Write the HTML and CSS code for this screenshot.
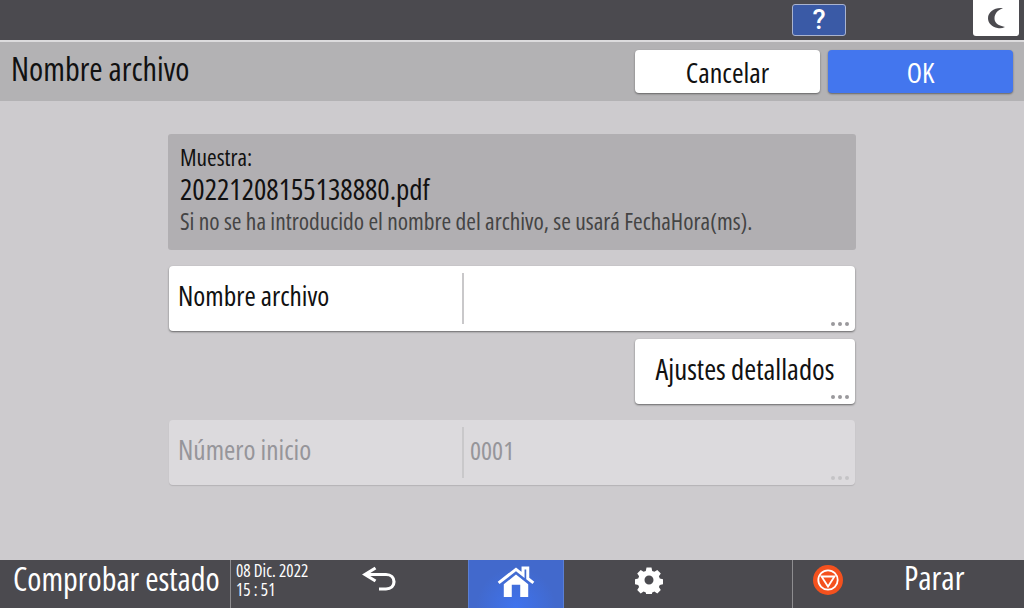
FILE: index.html
```html
<!DOCTYPE html>
<html lang="es">
<head>
<meta charset="utf-8">
<title>Nombre archivo</title>
<link rel="stylesheet" href="styles.css">
</head>
<body>
<div class="screen">
  <header class="topbar">
    <button class="help">?</button>
    <button class="night">
      <svg width="17" height="21" viewBox="0 0 17 21"><path d="M15 .3C9.500 2 6.500 6 6.500 10.500 6.500 14.500 9.500 17.500 17 19 14.500 20.300 12 20.600 9.500 20 4 19 0 15 0 10.200 0 4 7-1 15 .3z" fill="#4b4a4f"/></svg>
    </button>
  </header>
  <div class="titlebar">
    <h1 class="title">Nombre archivo</h1>
    <div class="actions">
      <button class="btn">Cancelar</button>
      <button class="btn primary">OK</button>
    </div>
  </div>
  <main class="content">
    <section class="sample">
      <div class="s1">Muestra:</div>
      <div class="s2">20221208155138880.pdf</div>
      <div class="s3">Si no se ha introducido el nombre del archivo, se usará FechaHora(ms).</div>
    </section>
    <div class="field">
      <div class="label">Nombre archivo</div>
      <div class="value"></div>
      <i class="dots"><b></b><b></b><b></b></i>
    </div>
    <div class="row-right">
      <button class="detail">Ajustes detallados<i class="dots"><b></b><b></b><b></b></i></button>
    </div>
    <div class="field disabled">
      <div class="label">Número inicio</div>
      <div class="value">0001</div>
      <i class="dots"><b></b><b></b><b></b></i>
    </div>
  </main>
  <footer class="footer">
    <div class="status">Comprobar estado</div>
    <div class="clock">
      <div>08 Dic. 2022</div>
      <div>15 : 51</div>
    </div>
    <div class="nav back">
      <svg width="36" height="30" viewBox="0 0 36 30"><path d="M13.500 3 3 9.500 13.500 16M4 9.500h20c5 0 8 3.200 8 7.300s-3 7.200-8 7.200h-7" fill="none" stroke="#fff" stroke-width="3.200"/></svg>
    </div>
    <div class="nav home">
      <svg width="38" height="31" viewBox="0 0 40 33"><path d="M1.500 18 20 3.500 27.500 9.400V2h5v11.300l6 4.700" fill="none" stroke="#fff" stroke-width="3.200"/><path fill-rule="evenodd" d="M20 9 33 19.500V33H7V19.500zM15.500 20v13h9V20z" fill="#fff"/></svg>
    </div>
    <div class="nav gear">
      <svg width="28" height="28" viewBox="0 0 28 28"><path fill-rule="evenodd" fill="#fff" d="M11.500 1.500h5l.7 3.400 2.200.9 2.900-1.900 3.500 3.500-1.900 2.900.9 2.200 3.400.7v5l-3.400.7-.9 2.200 1.900 2.900-3.500 3.500-2.900-1.900-2.200.9-.7 3.400h-5l-.7-3.400-2.200-.9-2.900 1.900-3.500-3.500 1.900-2.900-.9-2.200-3.400-.7v-5l3.400-.7.9-2.200-1.900-2.900 3.500-3.500 2.900 1.900 2.200-.9zM14 9.500a4.500 4.500 0 1 0 0 9 4.500 4.500 0 0 0 0-9z"/></svg>
    </div>
    <div class="stop">
      <svg class="stop-icon" width="32" height="32" viewBox="0 0 32 32"><circle cx="16" cy="16" r="15" fill="#f4511e"/><circle cx="16" cy="16" r="9.700" fill="none" stroke="#fff" stroke-width="1.800"/><path d="M9.500 12.500h13L16 22.500z" fill="none" stroke="#fff" stroke-width="1.800"/></svg>
      <span class="stop-label">Parar</span>
    </div>
  </footer>
</div>
</body>
</html>
```
FILE: styles.css
```css
* { box-sizing: border-box; }
html, body { margin: 0; padding: 0; }
body { font-family: "Open Sans", "Noto Sans", sans-serif; font-stretch: 75%; color: #111; }
button { font: inherit; font-stretch: 75%; color: inherit; border: 0; padding: 0; }

.screen { width: 1024px; height: 608px; overflow: hidden; display: flex; flex-direction: column; background: #cdcbce; }

.topbar { height: 42px; flex: none; background: #4b4a4f; border-bottom: 2px solid #dcdbdd; display: flex; align-items: flex-start; }
.help { margin: 4px 0 0 792px; width: 54px; height: 32px; border-radius: 3px; border: 1px solid #a9b3cf; background: #3a5aa6; color: #fff; font-family: Roboto, sans-serif; font-stretch: 100%; font-size: 27px; font-weight: 500; line-height: 29px; }
.night { margin: 0 0 0 127px; width: 46px; height: 36px; background: #fff; border-radius: 0 0 3px 3px; display: flex; align-items: center; justify-content: center; }

.titlebar { height: 59px; flex: none; background: #b3b2b4; display: flex; align-items: flex-start; justify-content: space-between; padding: 8px 11px 0 11px; }
.title { margin: 0; font-weight: 400; font-size: 32.200px; line-height: 38px; color: #111; }
.actions { display: flex; gap: 8px; }
.btn { width: 185px; height: 43px; background: #fff; border-radius: 4px; box-shadow: 0 1px 2px rgba(0,0,0,.45); font-size: 28px; display: flex; align-items: center; justify-content: center; }
.btn.primary { background: #4376ee; color: #fff; }

.content { flex: 1; display: flex; flex-direction: column; align-items: stretch; padding: 33px 168px 0; }
.sample { height: 116px; background: #b1afb2; border-radius: 3px; padding: 9px 12px; }
.s1 { font-size: 23.300px; line-height: 28px; }
.s2 { font-size: 29px; line-height: 35px; }
.s3 { font-size: 23.400px; line-height: 30px; color: #444; }

.field { position: relative; height: 65px; margin: 16px 1px 0; background: #fff; border-radius: 4px; box-shadow: 0 1px 2px rgba(0,0,0,.5); display: flex; align-items: center; padding: 7px 0; }
.label { width: 295px; height: 100%; padding-left: 9px; font-size: 27.300px; line-height: 46px; border-right: 2px solid #c9c8ca; }
.value { flex: 1; padding: 0 0 6px 6px; font-size: 26px; line-height: 40px; }
.field.disabled { background: #dcdadd; box-shadow: 0 1px 1px rgba(0,0,0,.12); color: #96959a; }

.row-right { display: flex; justify-content: flex-end; margin: 8px 1px 0; }
.detail { position: relative; width: 220px; height: 65px; padding-bottom: 6px; background: #fff; border-radius: 4px; box-shadow: 0 1px 2px rgba(0,0,0,.5); font-size: 28.800px; display: flex; align-items: center; justify-content: center; }

.dots { position: absolute; right: 6px; bottom: 5px; display: flex; gap: 3px; }
.dots b { width: 4px; height: 4px; border-radius: 50%; background: #9a999c; }
.disabled .dots b { background: #c4c3c6; }

.footer { height: 48px; flex: none; background: #4b4a4f; display: flex; color: #fff; }
.status { width: 231px; flex: none; padding-left: 13px; font-size: 32.200px; line-height: 37px; border-right: 1px solid #8e8d90; white-space: nowrap; }
.clock { width: 115px; flex: none; padding: 1px 0 0 5px; font-size: 17.200px; line-height: 19px; white-space: nowrap; }
.nav { flex: none; display: flex; align-items: center; justify-content: center; height: 48px; }
.back { width: 122px; padding: 0 54px 9px 0; }
.home { width: 96px; background: radial-gradient(ellipse at 50% 100%, #3f73ee 0, #4269cc 60%); border-left: 1px solid #5a7fd4; border-right: 1px solid #5a7fd4; padding-bottom: 5px; }
.gear { width: 228px; padding: 0 58px 8px 0; }
.stop { flex: 1; display: flex; align-items: flex-start; border-left: 1px solid #8e8d90; padding: 4px 0 0 19px; }
.stop-icon { flex: none; }
.stop-label { margin-left: 60px; font-size: 32.500px; line-height: 36px; margin-top: -4px; }
```
